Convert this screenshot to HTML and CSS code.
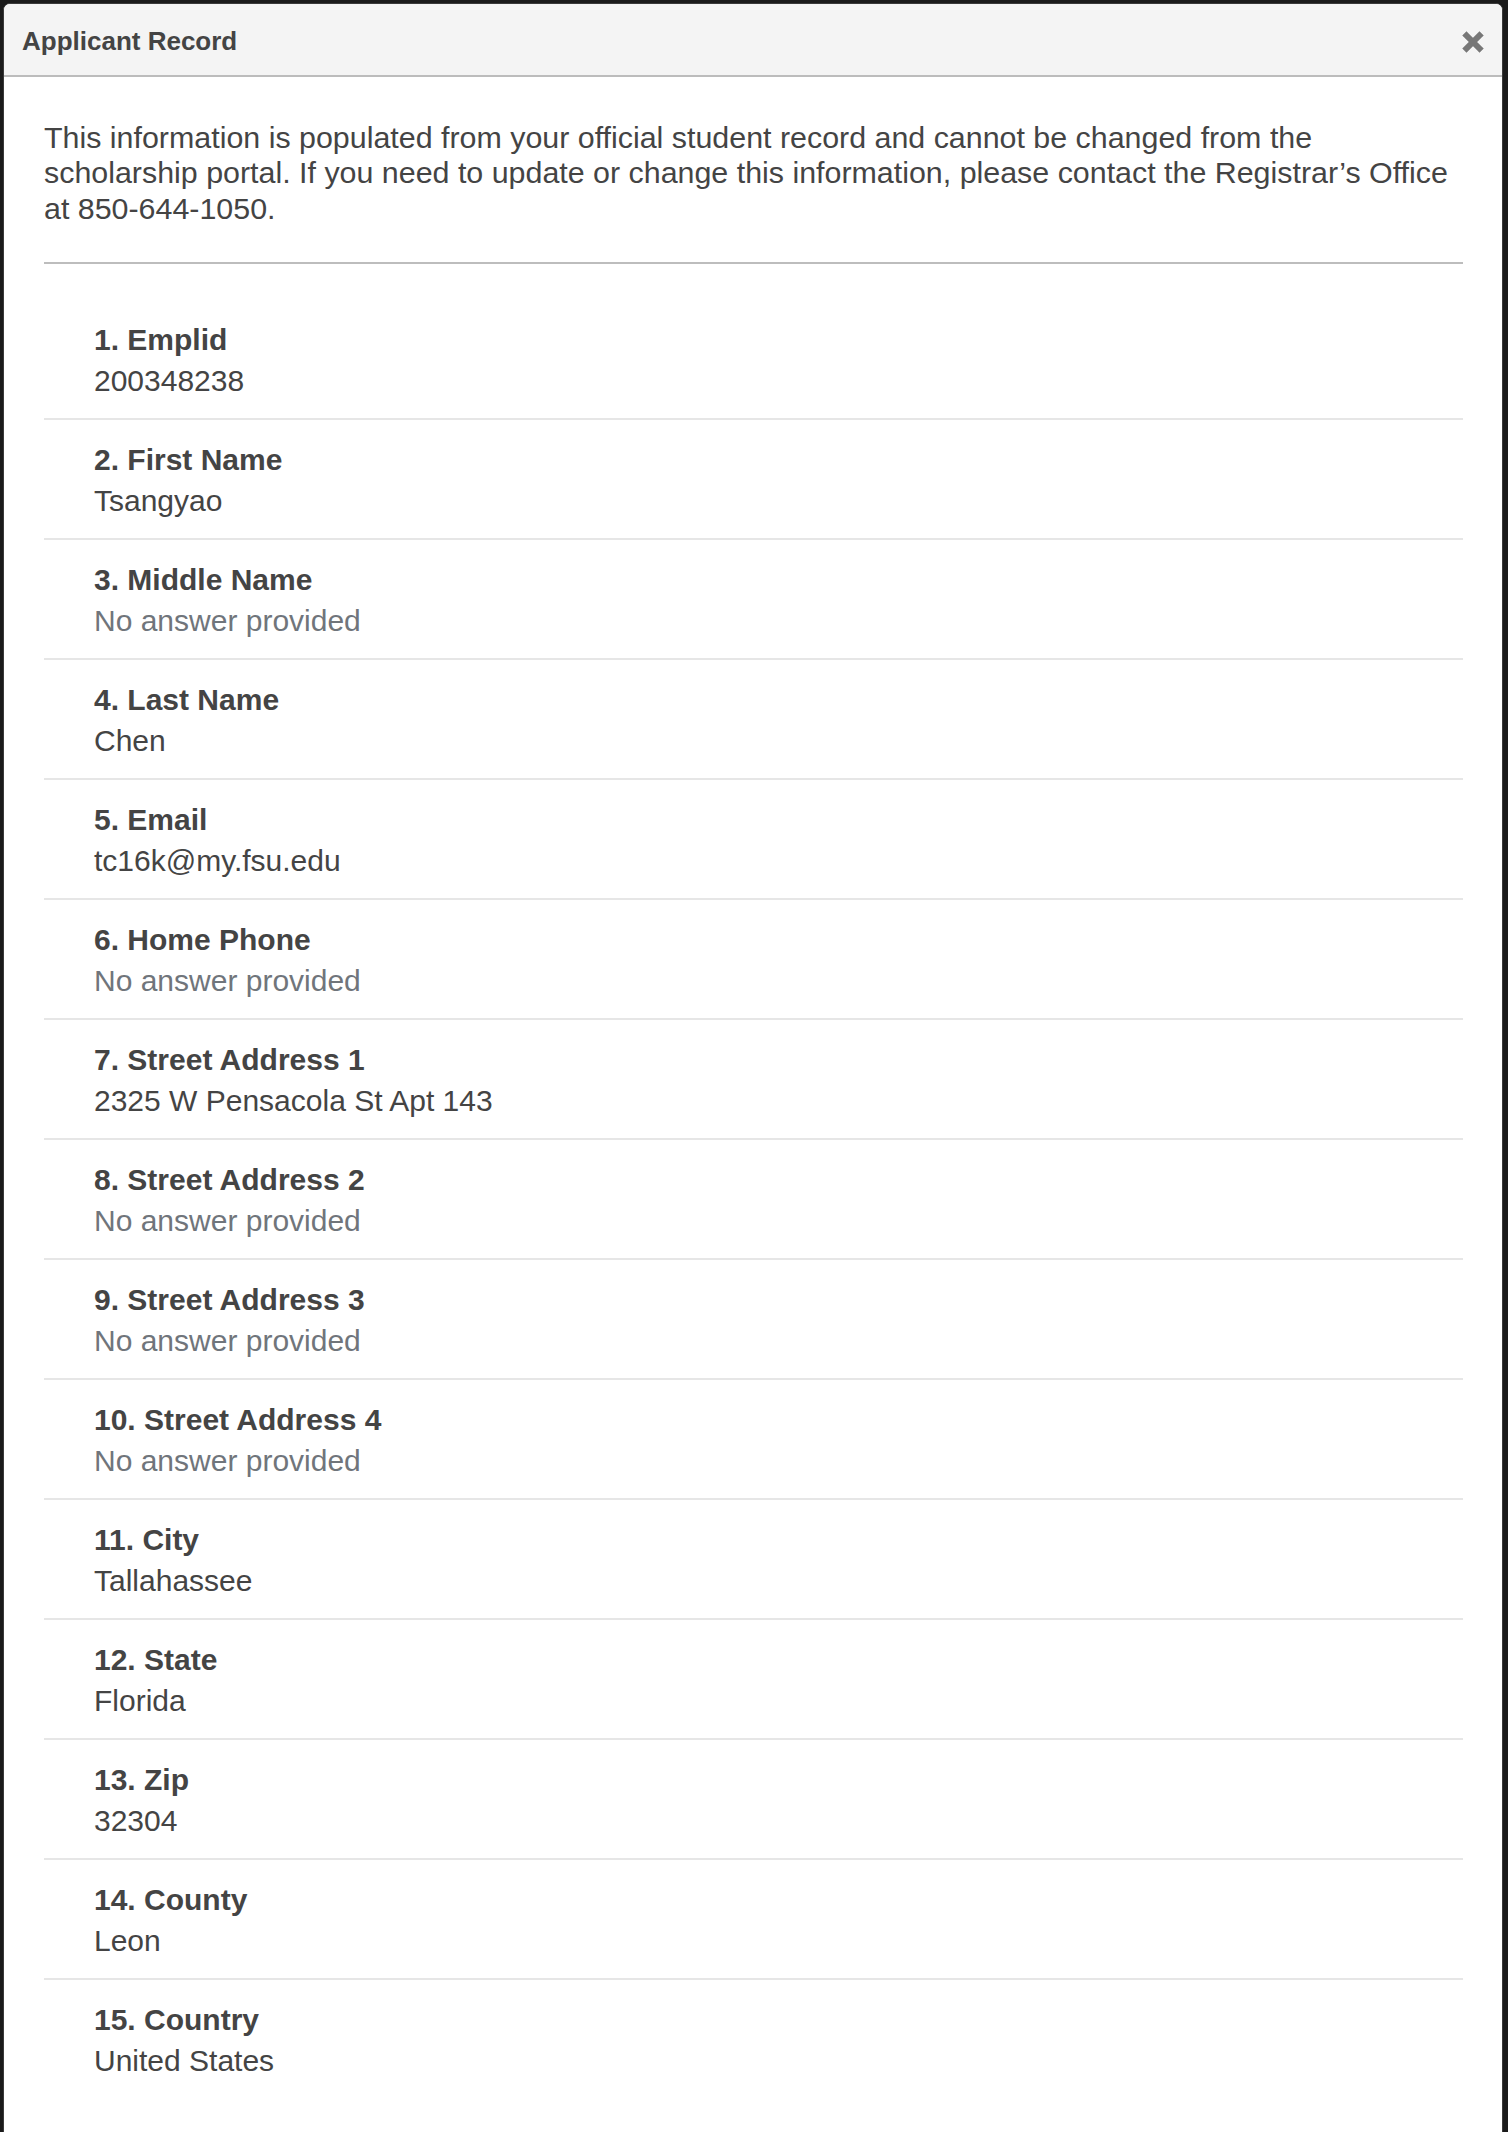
FILE: index.html
```html
<!DOCTYPE html>
<html lang="en">
<head>
<meta charset="utf-8">
<title>Applicant Record</title>
<link rel="stylesheet" href="styles.css">
</head>
<body>
<div class="modal">
  <div class="modal-header">
    <h4 class="modal-title">Applicant Record</h4>
    <button class="close" type="button" aria-label="Close">
      <svg viewBox="0 0 22 22" width="22" height="22" aria-hidden="true">
        <path d="M4.5 4.5 L17.5 17.5 M17.5 4.5 L4.5 17.5" stroke="#777" stroke-width="6" stroke-linecap="square" fill="none"/>
      </svg>
    </button>
  </div>
  <div class="modal-body">
    <p class="intro">This information is populated from your official student record and cannot be changed from the scholarship portal. If you need to update or change this information, please contact the Registrar’s Office at 850-644-1050.</p>
    <hr class="rule">
    <ol class="record">
      <li class="field"><div class="label">1. Emplid</div><div class="value">200348238</div></li>
      <li class="field"><div class="label">2. First Name</div><div class="value">Tsangyao</div></li>
      <li class="field"><div class="label">3. Middle Name</div><div class="value empty">No answer provided</div></li>
      <li class="field"><div class="label">4. Last Name</div><div class="value">Chen</div></li>
      <li class="field"><div class="label">5. Email</div><div class="value">tc16k@my.fsu.edu</div></li>
      <li class="field"><div class="label">6. Home Phone</div><div class="value empty">No answer provided</div></li>
      <li class="field"><div class="label">7. Street Address 1</div><div class="value">2325 W Pensacola St Apt 143</div></li>
      <li class="field"><div class="label">8. Street Address 2</div><div class="value empty">No answer provided</div></li>
      <li class="field"><div class="label">9. Street Address 3</div><div class="value empty">No answer provided</div></li>
      <li class="field"><div class="label">10. Street Address 4</div><div class="value empty">No answer provided</div></li>
      <li class="field"><div class="label">11. City</div><div class="value">Tallahassee</div></li>
      <li class="field"><div class="label">12. State</div><div class="value">Florida</div></li>
      <li class="field"><div class="label">13. Zip</div><div class="value">32304</div></li>
      <li class="field"><div class="label">14. County</div><div class="value">Leon</div></li>
      <li class="field last"><div class="label">15. Country</div><div class="value">United States</div></li>
    </ol>
  </div>
</div>
</body>
</html>
```
FILE: styles.css
```css
html, body {
  margin: 0;
  padding: 0;
  background: #1b1b1b;
}
body {
  font-family: "Liberation Sans", Arial, Helvetica, sans-serif;
  color: #444;
  padding: 3px 0 0 3px;
}
.modal {
  width: 1500px;
  min-height: 2200px;
  box-sizing: border-box;
  background: #fff;
  border: 1px solid #3a3a3a;
  border-radius: 7px 7px 0 0;
  overflow: hidden;
}
.modal-header {
  display: flex;
  align-items: center;
  justify-content: space-between;
  height: 73px;
  box-sizing: border-box;
  padding: 0 18px 0 18px;
  background: #f4f4f4;
  border-bottom: 2px solid #bcbcbc;
}
.modal-title {
  margin: 3px 0 0 0;
  font-size: 26px;
  font-weight: bold;
  color: #444;
}
.close {
  display: flex;
  align-items: center;
  justify-content: center;
  width: 22px;
  height: 22px;
  padding: 0;
  margin: 4px 0 0 0;
  border: 0;
  background: transparent;
}
.modal-body {
  padding: 43px 39px 0 40px;
}
.intro {
  margin: 0;
  font-size: 30.4px;
  line-height: 35.4px;
  color: #444;
}
.rule {
  margin: 36px 0 36px 0;
  border: 0;
  border-top: 2px solid #bdbdbd;
  height: 0;
}
.record {
  list-style: none;
  margin: 0;
  padding: 0;
}
.field {
  padding: 19px 0 17px 50px;
  border-bottom: 2px solid #e6e6e6;
  font-size: 30px;
  line-height: 41px;
}
.field.last {
  border-bottom: 0;
}
.label {
  font-weight: bold;
  color: #444;
}
.value {
  color: #444;
}
.value.empty {
  color: #70757b;
}
```
